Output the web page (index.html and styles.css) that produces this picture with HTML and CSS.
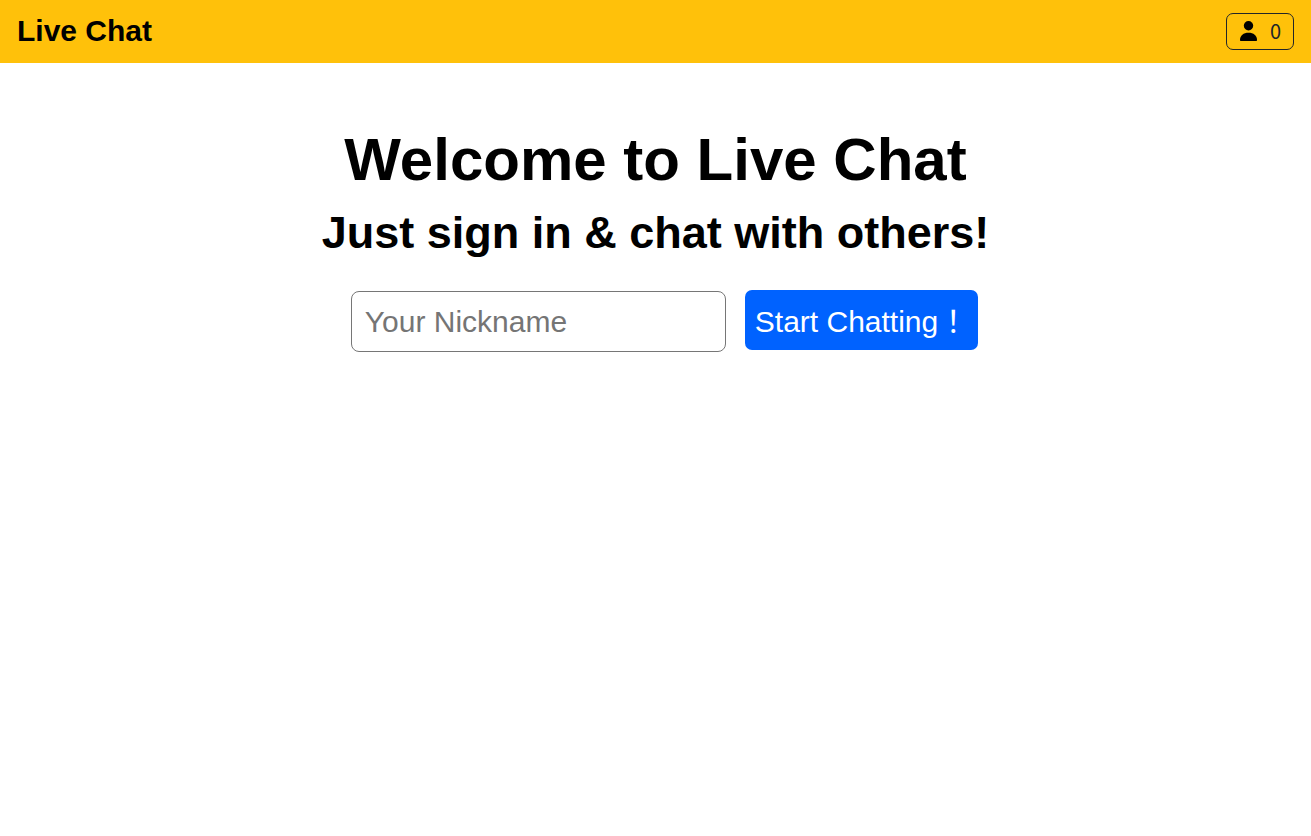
FILE: index.html
```html
<!DOCTYPE html>
<html lang="en">
<head>
  <meta charset="utf-8">
  <meta name="viewport" content="width=device-width, initial-scale=1">
  <title>Live Chat</title>
  <link rel="stylesheet" href="styles.css">
</head>
<body>
  <header class="navbar">
    <a class="brand" href="#">Live Chat</a>
    <button class="users" type="button" aria-label="Users online: 0">
      <svg class="users-icon" viewBox="0 0 17 20" aria-hidden="true">
        <circle cx="8.500" cy="4.800" r="4.700"/>
        <path d="M0 19C0 14.500 3.500 11.800 8.500 11.800S17 14.500 17 19c0 .7-.3 1-1 1H1c-.7 0-1-.3-1-1z"/>
      </svg>
      <span class="users-count">0</span>
    </button>
  </header>
  <main class="welcome">
    <h1 class="title">Welcome to Live Chat</h1>
    <h2 class="subtitle">Just sign in &amp; chat with others!</h2>
    <form class="signin">
      <input class="nickname" type="text" placeholder="Your Nickname" aria-label="Your Nickname">
      <button class="start" type="submit">Start Chatting！</button>
    </form>
  </main>
</body>
</html>
```

FILE: styles.css
```css
* {
  box-sizing: border-box;
}

body {
  margin: 0;
  background: #fff;
  color: #000;
  font-family: "Liberation Sans", "Noto Sans CJK TC", sans-serif;
}

.navbar {
  display: flex;
  align-items: flex-start;
  justify-content: space-between;
  padding: 13px 17px;
  background: #ffc10a;
}

.brand {
  color: inherit;
  font-size: 30px;
  font-weight: bold;
  line-height: 36px;
  text-decoration: none;
}

.users {
  display: flex;
  align-items: center;
  gap: 13px;
  height: 37px;
  padding: 0 12px 2px 13px;
  border: 1px solid #212529;
  border-radius: 7px;
  background: transparent;
  color: #212529;
}

.users-icon {
  width: 17px;
  height: 20px;
  fill: #000;
}

.users-count {
  font-family: "Noto Sans CJK TC", sans-serif;
  font-size: 20px;
  line-height: 26px;
}

.welcome {
  display: flex;
  flex-direction: column;
  align-items: center;
  padding-top: 62px;
}

.title {
  margin: 0;
  font-size: 60px;
  line-height: 70px;
}

.subtitle {
  margin: 12px 0 0;
  font-size: 45px;
  line-height: 52px;
}

.signin {
  display: flex;
  align-items: baseline;
  gap: 19px;
  margin-top: 31px;
  padding-left: 18px;
}

.nickname {
  width: 375px;
  height: 61px;
  padding: 2px 13px 0;
  border: 1px solid #767676;
  border-radius: 8px;
  background: #fff;
  color: #000;
  font: inherit;
  font-size: 30px;
}

.nickname::placeholder {
  color: #757575;
}

.start {
  height: 60px;
  padding: 3px 10px 0;
  border: 0;
  border-radius: 7px;
  background: #0062ff;
  color: #fff;
  font: inherit;
  font-size: 30px;
  line-height: 57px;
}
```
